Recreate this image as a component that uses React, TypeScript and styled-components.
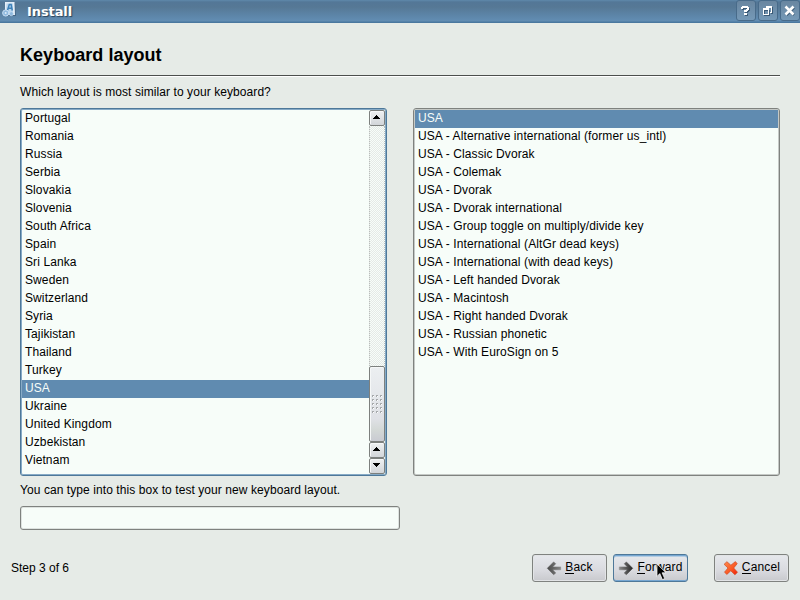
import React from "react";
import styled, { createGlobalStyle, css } from "styled-components";

const GlobalStyle = createGlobalStyle`
  * { box-sizing: border-box; }
  body {
    margin: 0;
    background: #e6ebe7;
    color: #000;
    font: 12px/18px "Liberation Sans", Arial, sans-serif;
    overflow: hidden;
  }
`;

const Window = styled.div`
  width: 800px;
  height: 600px;
  display: flex;
  flex-direction: column;
  background: #e6ebe7;
`;

const TitleBar = styled.header`
  height: 23px;
  display: flex;
  align-items: flex-start;
  background: linear-gradient(#5f89ab 0, #537797 2px, #567895 7px, #5c84a7 15px, #628db3 21px, #4a789f 22px);
`;

const AppIcon = styled.svg`
  width: 18px;
  height: 18px;
  flex: none;
`;

const WindowTitle = styled.h1`
  flex: 1;
  margin: 0 0 0 9px;
  color: #fff;
  font: bold 13px/23px "DejaVu Sans", sans-serif;
  letter-spacing: -0.1px;
  text-shadow: 1px 1px 1px #29435a;
`;

const TitleButtons = styled.div`
  display: flex;
  gap: 2px;
  height: 21px;
`;

const TitleButton = styled.button`
  width: 20px;
  height: 21px;
  padding: 0;
  border: 1px solid #486b8a;
  border-radius: 3px;
  background: linear-gradient(#6986a0, #7599b7);
  display: flex;
  svg { width: 18px; height: 19px; }
`;

const Body = styled.main`
  flex: 1;
  display: flex;
  flex-direction: column;
  padding: 0 20px;
`;

const Heading = styled.h2`
  height: 52px;
  margin: 0;
  padding-top: 20px;
  font-size: 18px;
  line-height: 24px;
  letter-spacing: 0.04px;
`;

const Rule = styled.div`
  height: 2px;
  background: #4c4f4d;
  border-bottom: 1px solid #fff;
`;

const Prompt = styled.label<{ $top: number }>`
  height: ${(p) => p.$top + 18}px;
  padding-top: ${(p) => p.$top}px;
  letter-spacing: 0.075px;
  white-space: nowrap;
`;

const Lists = styled.div`
  display: flex;
  justify-content: space-between;
  margin-top: 7px;
`;

const ListBox = styled.div<{ $focused?: boolean }>`
  width: 367px;
  height: 368px;
  display: flex;
  border: 1px solid ${(p) => (p.$focused ? "#4e7899" : "#7f827f")};
  border-radius: 3px;
  background: #f7fdf9;
  box-shadow: inset 0 0 0 1px ${(p) => (p.$focused ? "#86aac6" : "#c5c9c6")};
  padding: 1px;
`;

const Rows = styled.ul`
  flex: 1;
  margin: 0;
  padding: 0;
  list-style: none;
`;

const Row = styled.li<{ $selected: boolean }>`
  height: 18px;
  padding-left: 3px;
  line-height: 17px;
  letter-spacing: 0.1px;
  white-space: nowrap;
  ${(p) =>
    p.$selected &&
    css`
      background: #608bb0;
      color: #f7fdf9;
    `}
`;

const ScrollBar = styled.div`
  width: 16px;
  display: flex;
  flex-direction: column;
`;

const Track = styled.div`
  flex: 1;
  border: 1px dotted #b9bdbb;
  border-width: 0 1px;
  background: repeating-conic-gradient(#e5e9e6 0 25%, #f7fdf9 0 50%) 0 0 / 2px 2px;
`;

const Thumb = styled.div`
  height: 76px;
  border: 1px solid #7d807e;
  border-radius: 2px;
  background: linear-gradient(#eceff1, #dfe1e6 70%, #d3d8d6 85%, #c9cbd2);
  box-shadow: inset 1px 1px #f6f8f8;
  svg { display: block; margin: 28px 0 0 1px; }
`;

const ArrowButton = styled.div`
  height: 16px;
  border: 1px solid #7d807e;
  border-radius: 2px;
  background: linear-gradient(#eff1f2, #d2d5d9);
  box-shadow: inset 1px 1px #f7f8f9;
  svg { display: block; }
`;

const TestInput = styled.input`
  width: 380px;
  height: 24px;
  margin-top: 7px;
  border: 1px solid #7f827f;
  border-radius: 3px;
  background: #f7fdf9;
  box-shadow: inset 0 0 0 1px #dde2df;
`;

const Footer = styled.footer`
  height: 46px;
  display: flex;
  align-items: flex-start;
  padding: 0 11px;
`;

const Step = styled.span`
  flex: 1;
  padding-top: 5px;
`;

const Action = styled.button<{ $focused?: boolean; $gap?: number }>`
  position: relative;
  width: 75px;
  height: 28px;
  margin-left: ${(p) => p.$gap ?? 6}px;
  padding: 0;
  display: flex;
  align-items: center;
  justify-content: center;
  gap: 3px;
  border: 1px solid ${(p) => (p.$focused ? "#4e7899" : "#7f827f")};
  border-radius: 3px;
  background: linear-gradient(#e6e8ec, #d9dadf 60%, #c8c9cd);
  box-shadow: ${(p) => (p.$focused ? "inset 0 1px #76a7d2, inset 0 -1px #76a7d2, inset 0 2px #b5cde2" : "inset 0 0 0 1px #e2e4e6")};
  font: inherit;
  color: #000;
  svg { flex: none; }
`;

const ActionLabel = styled.span`
  padding-bottom: 2px;
  letter-spacing: 0.15px;
`;

const Mnemonic = styled.span`
  display: inline-block;
  height: 16px;
  line-height: 18px;
  border-bottom: 1px solid #000;
`;

const Pointer = styled.svg`
  position: absolute;
  left: 42px;
  top: 8px;
`;

const countries = [
  "Portugal", "Romania", "Russia", "Serbia", "Slovakia", "Slovenia", "South Africa",
  "Spain", "Sri Lanka", "Sweden", "Switzerland", "Syria", "Tajikistan", "Thailand",
  "Turkey", "USA", "Ukraine", "United Kingdom", "Uzbekistan", "Vietnam",
];

const variants = [
  "USA", "USA - Alternative international (former us_intl)", "USA - Classic Dvorak",
  "USA - Colemak", "USA - Dvorak", "USA - Dvorak international",
  "USA - Group toggle on multiply/divide key", "USA - International (AltGr dead keys)",
  "USA - International (with dead keys)", "USA - Left handed Dvorak", "USA - Macintosh",
  "USA - Right handed Dvorak", "USA - Russian phonetic", "USA - With EuroSign on 5",
];

const ListRows = ({ items }: { items: string[] }) => (
  <Rows>
    {items.map((item) => (
      <Row key={item} $selected={item === "USA"}>{item}</Row>
    ))}
  </Rows>
);

const Arrow = ({ down }: { down?: boolean }) => (
  <ArrowButton>
    <svg width="14" height="14" shapeRendering="crispEdges">
      <path d={down ? "M3 4h7v1h-1v1h-1v1h-1v1h-1v-1h-1v-1h-1v-1h-1z" : "M6 4h1v1h1v1h1v1h1v1h-7v-1h1v-1h1v-1h1z"} />
    </svg>
  </ArrowButton>
);

const Grip = () => (
  <svg width="12" height="20" shapeRendering="crispEdges">
    {[0, 4, 8, 12, 16].flatMap((y) =>
      [1, 5, 9].map((x) => (
        <React.Fragment key={`${x}-${y}`}>
          <path d={`M${x} ${y}h2v1h-1v1h-1z`} fill="#a6a9ab" />
          <path d={`M${x + 1} ${y + 1}h1v1h-1z`} fill="#fff" />
        </React.Fragment>
      ))
    )}
  </svg>
);

const DirectionIcon = ({ right }: { right?: boolean }) => (
  <svg width="16" height="16" viewBox="0 0 16 16">
    <defs>
      <linearGradient id={right ? "fwd" : "bck"} x1="0" x2="1">
        <stop offset="0" stopColor={right ? "#8a8a8a" : "#858585"} />
        <stop offset="1" stopColor={right ? "#262626" : "#4a4a4a"} />
      </linearGradient>
    </defs>
    <path
      transform={right ? undefined : "matrix(-1 0 0 1 16 0)"}
      fill={`url(#${right ? "fwd" : "bck"})`}
      stroke={`url(#${right ? "fwd" : "bck"})`}
      strokeWidth=".5"
      strokeLinejoin="round"
      d="M1.3 6.9h8L6.2 3.7 8.4 1.9 14.7 8.3l-6.3 6.4-2.2-1.7 3.1-3.2h-8z"
    />
  </svg>
);

const CancelIcon = () => (
  <svg width="16" height="16" viewBox="0 0 16 16">
    <defs>
      <linearGradient id="cancel" x1="0" y1="0" x2="1" y2="1">
        <stop offset="0" stopColor="#ff8c51" />
        <stop offset=".55" stopColor="#fb5a25" />
        <stop offset="1" stopColor="#f01c0a" />
      </linearGradient>
    </defs>
    <path
      d="M3.9 1.7 7.9 5.2l4.5-3.6 1.8 2.1L10.7 8l3.8 4.3-2.6 2.5-4.1-4-3.9 3.6-2.4-2.2L5 8 1.1 4.3z"
      fill="url(#cancel)"
      stroke="#cf4a22"
      strokeWidth=".7"
      strokeLinejoin="round"
    />
  </svg>
);

export default function App() {
  return (
    <>
      <GlobalStyle />
      <Window>
        <TitleBar>
          <AppIcon viewBox="0 0 18 18">
            <path d="M6 3 15 3l1 13H7z" fill="#29415a" opacity=".45" />
            <path d="M5 2h9.5l.5 13H5z" fill="#e4eef8" />
            <path d="M6.5 3.5h6.5v9H6z" fill="#b9d5ed" />
            <path d="m7.5 10.5 1.8-6h1.8l1.2 6M8 8.3h3.5" fill="none" stroke="#3c81b9" strokeWidth="1.5" />
            <circle cx="5.7" cy="13" r="3.1" fill="#8fb9de" stroke="#c4dcf2" />
            <circle cx="5.7" cy="13" r="1" fill="#dcebf8" />
            <circle cx="11.3" cy="13.7" r="2" fill="#8fb9de" stroke="#c4dcf2" strokeWidth=".7" />
          </AppIcon>
          <WindowTitle>Install</WindowTitle>
          <TitleButtons>
            <TitleButton aria-label="Help">
              <svg viewBox="0 0 18 19" shapeRendering="crispEdges">
                <path transform="translate(1 1)" fill="#3b5a76" d="M5 5h6v1h1v3h-1v1h-1v1H7V9h2V8h1V7H6v1H4V6h1zM7 12h3v2H7z" />
                <path fill="#fff" d="M5 5h6v1h1v3h-1v1h-1v1H7V9h2V8h1V7H6v1H4V6h1zM7 12h3v2H7z" />
              </svg>
            </TitleButton>
            <TitleButton aria-label="Restore">
              <svg viewBox="0 0 18 19" shapeRendering="crispEdges">
                <path transform="translate(1 1)" d="M7.5 7V5.5h5v6H11M4.5 8.5h5v5h-5z" fill="none" stroke="#3b5a76" />
                <path d="M7.5 7V5.5h5v6H11M4.5 8.5h5v5h-5zM7 6.5h6M4 7.5h6" fill="none" stroke="#fff" />
              </svg>
            </TitleButton>
            <TitleButton aria-label="Close">
              <svg viewBox="0 0 18 19">
                <path d="m5.5 6.5 7.5 7.5m0-7.5-7.5 7.5" stroke="#3b5a76" strokeWidth="2.6" />
                <path d="m4.5 5.5 8 8m0-8-8 8" stroke="#fff" strokeWidth="2.6" />
              </svg>
            </TitleButton>
          </TitleButtons>
        </TitleBar>
        <Body>
          <Heading>Keyboard layout</Heading>
          <Rule />
          <Prompt htmlFor="layouts" $top={6}>Which layout is most similar to your keyboard?</Prompt>
          <Lists id="layouts">
            <ListBox $focused>
              <ListRows items={countries} />
              <ScrollBar>
                <Arrow />
                <Track />
                <Thumb><Grip /></Thumb>
                <Arrow />
                <Arrow down />
              </ScrollBar>
            </ListBox>
            <ListBox><ListRows items={variants} /></ListBox>
          </Lists>
          <Prompt htmlFor="test" $top={5}>You can type into this box to test your new keyboard layout.</Prompt>
          <TestInput id="test" />
        </Body>
        <Footer>
          <Step>Step 3 of 6</Step>
          <Action><DirectionIcon /><ActionLabel><Mnemonic>B</Mnemonic>ack</ActionLabel></Action>
          <Action $focused>
            <DirectionIcon right />
            <ActionLabel><Mnemonic>F</Mnemonic>orward</ActionLabel>
            <Pointer width="12" height="18" viewBox="0 0 12 18">
              <path d="M1 1v12.4l2.8-2.8 2.6 6 2.3-1-2.6-5.8H10z" fill="#000" stroke="#fff" strokeWidth=".7" />
            </Pointer>
          </Action>
          <Action $gap={26}><CancelIcon /><ActionLabel><Mnemonic>C</Mnemonic>ancel</ActionLabel></Action>
        </Footer>
      </Window>
    </>
  );
}
